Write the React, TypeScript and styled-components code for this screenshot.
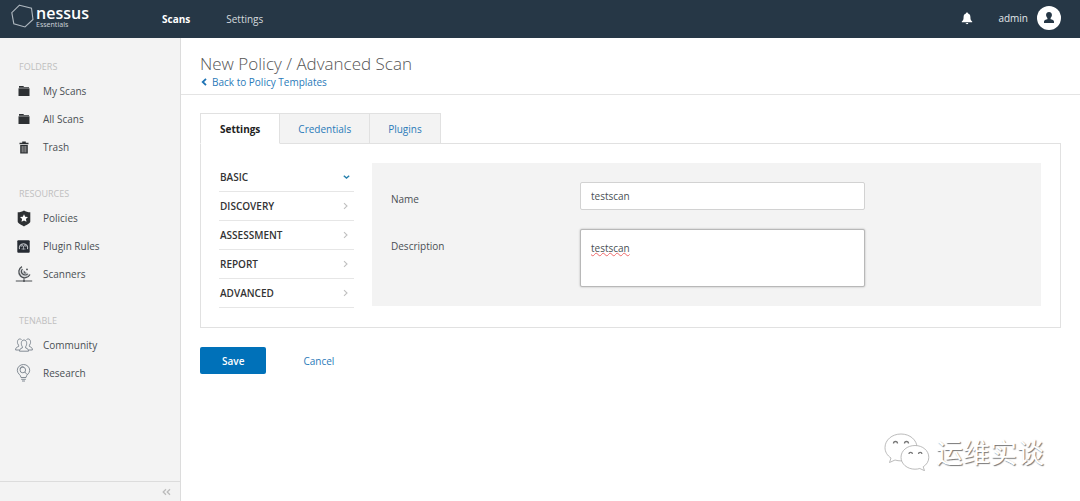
import React from 'react';
import styled, { createGlobalStyle } from 'styled-components';

const Global = createGlobalStyle`
  * { box-sizing: border-box; }
  body { margin: 0; background: #fff; color: #4a4f54; font: 10px/14px "Open Sans", "Noto Sans", sans-serif; }
  button, input, textarea { font: inherit; color: inherit; }
  a { color: inherit; text-decoration: none; }
  ul { list-style: none; margin: 0; padding: 0; }
  svg { display: block; flex: none; }
`;

const Page = styled.div`
  min-height: 100vh;
  display: flex;
  flex-direction: column;
`;

const TopBar = styled.header`
  height: 38px;
  padding: 0 19px 2px 11px;
  display: flex;
  align-items: center;
  background: #263746;
  color: #e3e7ea;
`;

const Brand = styled.a`
  display: flex;
  align-items: center;
  gap: 2px;
  width: 151px;
  margin-bottom: 4px;
`;

const BrandName = styled.span`
  display: block;
  font: 600 16px/16px "Open Sans", sans-serif;
  color: #fff;
`;

const BrandEdition = styled.span`
  display: block;
  font: 7px/7px "Noto Sans", sans-serif;
  color: #c9d0d6;
`;

const TopNav = styled.nav`
  display: flex;
  gap: 36px;
  flex: 1;
  padding-top: 2px;
`;

const TopLink = styled.a<{ $active?: boolean }>`
  color: ${(p) => (p.$active ? '#fff' : '#d5dade')};
  font-weight: ${(p) => (p.$active ? 700 : 400)};
`;

const IconButton = styled.button`
  display: flex;
  padding: 0;
  border: 0;
  background: none;
  cursor: pointer;
`;

const Account = styled.button`
  display: flex;
  align-items: center;
  gap: 9px;
  margin-left: 25px;
  padding: 0;
  border: 0;
  background: none;
  cursor: pointer;
`;

const Body = styled.div`
  flex: 1;
  display: flex;
`;

const Sidebar = styled.aside`
  width: 181px;
  flex: none;
  display: flex;
  flex-direction: column;
  background: #f3f3f3;
  border-right: 1px solid #dcdcdc;
`;

const SideGroups = styled.nav`
  flex: 1;
  padding-top: 19px;
  display: flex;
  flex-direction: column;
  gap: 23px;
`;

const SideHeading = styled.h2`
  margin: 0;
  padding-left: 19px;
  font-size: 9px;
  line-height: 20px;
  font-weight: 400;
  color: #bfbfbf;
`;

const SideLink = styled.a`
  display: flex;
  align-items: center;
  gap: 10px;
  height: 28px;
  padding-left: 14px;
`;

const IconSlot = styled.span`
  width: 19px;
  display: flex;
  justify-content: center;
`;

const Collapse = styled.button`
  height: 20px;
  padding: 0 9px;
  display: flex;
  justify-content: flex-end;
  align-items: center;
  border: 0;
  border-top: 1px solid #dcdcdc;
  background: none;
`;

const Main = styled.main`
  flex: 1;
  min-width: 0;
`;

const PageHead = styled.div`
  height: 57px;
  padding: 14px 19px 0;
  border-bottom: 1px solid #e4e4e4;
`;

const Title = styled.h1`
  margin: 0;
  font-size: 17px;
  line-height: 23px;
  font-weight: 300;
  color: #555;
`;

const BackLink = styled.a`
  display: flex;
  align-items: center;
  gap: 4px;
  color: #2a7ab9;
`;

const Content = styled.div`
  padding: 18px 19px;
`;

const Tabs = styled.div`
  display: flex;
`;

const Tab = styled.button<{ $active?: boolean }>`
  height: 31px;
  margin-bottom: -1px;
  padding: 0 ${(p) => (p.$active ? 19 : 18)}px;
  border: 1px solid #e1e1e1;
  border-bottom-color: ${(p) => (p.$active ? '#fff' : '#e1e1e1')};
  background: ${(p) => (p.$active ? '#fff' : '#f3f3f3')};
  color: ${(p) => (p.$active ? '#222' : '#2a7ab9')};
  font-weight: ${(p) => (p.$active ? 700 : 400)};
  z-index: 1;
  & + & { border-left-width: 0; }
`;

const Panel = styled.section`
  display: flex;
  align-items: flex-start;
  gap: 18px;
  padding: 19px 19px 19px 18px;
  border: 1px solid #e1e1e1;
`;

const SectionList = styled.ul`
  width: 135px;
  flex: none;
`;

const SectionButton = styled.button`
  width: 100%;
  height: 29px;
  padding: 0 4px 0 1px;
  display: flex;
  align-items: center;
  justify-content: space-between;
  border: 0;
  border-bottom: 1px solid #e6e6e6;
  background: none;
  font-weight: 600;
  color: #333;
`;

const Form = styled.form`
  flex: 1;
  display: grid;
  gap: 19px;
  padding: 19px;
  background: #f3f3f3;
`;

const Field = styled.div`
  display: grid;
  grid-template-columns: 170px minmax(0, 285px);
  column-gap: 19px;
`;

const Label = styled.label`
  padding-top: 10px;
`;

const TextInput = styled.input`
  height: 28px;
  padding: 0 10px;
  border: 1px solid #d2d2d2;
  border-radius: 2px;
  background: #fff;
  outline: 0;
`;

const TextArea = styled.textarea`
  height: 58px;
  padding: 11px 10px;
  border: 1px solid #b8b8b8;
  border-radius: 2px;
  box-shadow: 0 0 2px #aaa;
  background: #fff;
  outline: 0;
  resize: none;
  text-decoration: underline wavy #ee6a6a 1px;
  text-underline-offset: 0;
`;

const Actions = styled.div`
  display: flex;
  gap: 19px;
  margin-top: 19px;
`;

const Button = styled.button<{ $primary?: boolean }>`
  height: 27px;
  padding: 0 ${(p) => (p.$primary ? 22 : 18)}px;
  border: 0;
  border-radius: 2px;
  background: ${(p) => (p.$primary ? '#0071b9' : 'none')};
  color: ${(p) => (p.$primary ? '#fff' : '#2a7ab9')};
  font-weight: ${(p) => (p.$primary ? 600 : 400)};
`;

const Watermark = styled.div`
  position: absolute;
  right: 36px;
  bottom: 30px;
  display: flex;
  align-items: center;
  gap: 6px;
  font: 27px/38px "Noto Sans CJK SC", sans-serif;
  color: #fff;
  text-shadow: 1px 1px 1px #777;
`;

const dark = '#2d3033';
const slate = '#76808a';

const Folder = () => (
  <svg width="12" height="12" viewBox="0 0 12 12" fill={dark}>
    <path d="M1 2.700V1h4.300l.8 1H11v.7z" />
    <path d="M.5 3.300h11V11H.5z" />
  </svg>
);

const Trash = () => (
  <svg width="10" height="13" viewBox="0 0 10 13" fill={dark}>
    <path d="M3.2.5h3.6v1.2H9.5v1.6h-9V1.7h2.7z" />
    <path d="M1.2 4h7.6v8.5H1.2z" />
    <path d="M3.2 5v6.4M5 5v6.4M6.8 5v6.4" stroke="#b9b9b9" strokeWidth=".8" />
  </svg>
);

const Shield = () => (
  <svg width="14" height="17" viewBox="0 0 14 17">
    <path d="M7 .5C8.600 1.700 11 2.300 13.300 2.300V11.500C13.300 13.500 9.500 14.700 7 16.500 4.500 14.700.7 13.500.7 11.500V2.300C3 2.300 5.400 1.700 7 .5z" fill={dark} />
    <path d="M7 4.200l1.200 2.600 2.800.3-2.100 1.900.6 2.800L7 10.400l-2.500 1.400.6-2.800L3 7.100l2.800-.3z" fill="#fff" />
  </svg>
);

const Rules = () => (
  <svg width="13" height="13" viewBox="0 0 13 13" fill="none">
    <rect x=".3" y=".3" width="12.400" height="12.400" rx="1" fill="#262b33" />
    <path d="M2.500 9.200A4.200 4.200 0 1 1 10.500 9.200" stroke="#c3c6ca" strokeWidth="1.100" />
    <path d="M4 7l1.200-2.400L6.500 7.300l1.300-2.700L9 7M6.500 6v3.500M4.500 9h4" stroke="#b0b4ba" strokeWidth=".8" />
  </svg>
);

const Dish = () => (
  <svg width="18" height="18" viewBox="0 0 18 18" fill="none" stroke="#4b4f53">
    <path d="M5.500 2.600A6 6 0 1 0 14.600 9.500z" fill="#d6d8da" stroke="none" />
    <path d="M7 1.600A5.900 5.900 0 1 0 15 9.500" strokeWidth="1.200" />
    <path d="M7.500 4A3.500 3.500 0 1 0 12.700 8.800" strokeWidth="1.100" />
    <path d="M9.300 6.200v1.800h1.900" strokeWidth="1" />
    <circle cx="12" cy="4.400" r=".9" fill="#4b4f53" stroke="none" />
    <path d="M9 13v2.500M.8 16h16.400" />
    <circle cx="9" cy="16" r="1" fill="#4b4f53" stroke="none" />
  </svg>
);

const People = () => (
  <svg width="18" height="14" viewBox="0 0 18 14" fill="none" stroke={slate} strokeWidth=".9">
    <path d="M4.500 13.200c0-2 .8-2.600 2.800-3.200V8.600C5.700 6.500 5.900 2 9 2s3.300 4.500 1.700 6.600V10c2 .6 2.800 1.200 2.800 3.200z" />
    <path d="M6.500 1.500C3.500-.2 1.900 2.600 2.600 5.400l1 1.900v1.200C1.600 9.200.6 9.800.6 12h3.600M11.500 1.500c3-1.700 4.600 1.100 3.900 3.900l-1 1.900v1.200c2 .7 3 1.300 3 3.500h-3.600" />
  </svg>
);

const Bulb = () => (
  <svg width="15" height="18" viewBox="0 0 15 18" fill="none" stroke={slate} strokeWidth=".9">
    <path d="M5 13.500C5 10.800 1.300 9.800 1.300 6.300a6.200 5.800 0 0 1 12.400 0C13.700 9.800 10 10.800 10 13.500z" />
    <path d="M5.200 15.300h4.600M6 17h3" />
    <circle cx="6.800" cy="6" r="2.800" />
    <path d="M8.800 8l2.400 2.700M4 4.600c.5-1.500 2-2.200 3.500-2" />
  </svg>
);

const Chevron = ({ down }: { down?: boolean }) => (
  <svg width="7" height="8" viewBox="0 0 7 8" fill="none" stroke={down ? '#2780ad' : '#c0c0c0'} strokeWidth={down ? 1.4 : 1.1}>
    <path d={down ? 'M.8 2.700l2.700 2.400 2.700-2.400' : 'M1 1.200l3 2.800-3 2.800'} />
  </svg>
);

const groups = [
  { title: 'FOLDERS', items: [['My Scans', Folder], ['All Scans', Folder], ['Trash', Trash]] },
  { title: 'RESOURCES', items: [['Policies', Shield], ['Plugin Rules', Rules], ['Scanners', Dish]] },
  { title: 'TENABLE', items: [['Community', People], ['Research', Bulb]] },
] as { title: string; items: [string, React.FC][] }[];

const sections = ['BASIC', 'DISCOVERY', 'ASSESSMENT', 'REPORT', 'ADVANCED'];

export default function App() {
  return (
    <Page>
      <Global />
      <TopBar>
        <Brand href="#">
          <svg width="23" height="24" viewBox="0 0 23 24" fill="none" stroke="#aeb7bf" strokeWidth="1.100">
            <path d="M8.500 1.200L20.500 4.300 22 15.500 14 23 2.800 19.700.8 8.600z" />
          </svg>
          <span>
            <BrandName>nessus</BrandName>
            <BrandEdition>Essentials</BrandEdition>
          </span>
        </Brand>
        <TopNav>
          <TopLink href="#" $active>Scans</TopLink>
          <TopLink href="#">Settings</TopLink>
        </TopNav>
        <IconButton aria-label="Notifications">
          <svg width="12" height="13" viewBox="0 0 12 13" fill="#fff">
            <path d="M6 .6c.7 0 1 .4 1 1C8.700 2 9.400 3.400 9.400 5c0 2.800.6 3.600 1.800 4.600v.7H.8v-.7C2 8.600 2.600 7.800 2.600 5c0-1.600.7-3 2.400-3.400 0-.6.3-1 1-1zM4.700 11h2.600c-.1.8-.6 1.200-1.300 1.200S4.800 11.800 4.700 11z" />
          </svg>
        </IconButton>
        <Account>
          admin
          <svg width="24" height="24" viewBox="0 0 24 24">
            <circle cx="12" cy="12" r="12" fill="#fff" />
            <path d="M12 6c2 0 3.100 1.400 2.900 3.300-.1 1.400-.8 2-1.300 2.700v1.300c1.800.5 3.400.8 3.400 2.300V17H7v-1.400c0-1.500 1.600-1.800 3.400-2.300V12c-.5-.7-1.200-1.300-1.300-2.700C8.900 7.400 10 6 12 6z" fill="#263746" />
          </svg>
        </Account>
      </TopBar>
      <Body>
        <Sidebar>
          <SideGroups>
            {groups.map((g) => (
              <section key={g.title}>
                <SideHeading>{g.title}</SideHeading>
                <ul>
                  {g.items.map(([name, Icon]) => (
                    <li key={name}>
                      <SideLink href="#">
                        <IconSlot><Icon /></IconSlot>
                        {name}
                      </SideLink>
                    </li>
                  ))}
                </ul>
              </section>
            ))}
          </SideGroups>
          <Collapse aria-label="Collapse sidebar">
            <svg width="9" height="8" viewBox="0 0 9 8" fill="none" stroke="#bcbcbc" strokeWidth="1.300">
              <path d="M4 1.200L1.200 4 4 6.800M8 1.200L5.200 4 8 6.800" />
            </svg>
          </Collapse>
        </Sidebar>
        <Main>
          <PageHead>
            <Title>New Policy / Advanced Scan</Title>
            <BackLink href="#">
              <svg width="8" height="8" viewBox="0 0 8 8" fill="none" stroke="#1f74b5" strokeWidth="1.800">
                <path d="M6 .8L2.700 4 6 7.200" />
              </svg>
              Back to Policy Templates
            </BackLink>
          </PageHead>
          <Content>
            <Tabs role="tablist">
              <Tab role="tab" aria-selected $active>Settings</Tab>
              <Tab role="tab">Credentials</Tab>
              <Tab role="tab">Plugins</Tab>
            </Tabs>
            <Panel>
              <SectionList>
                {sections.map((s, i) => (
                  <li key={s}>
                    <SectionButton>{s}<Chevron down={i === 0} /></SectionButton>
                  </li>
                ))}
              </SectionList>
              <Form id="policy">
                <Field>
                  <Label htmlFor="name">Name</Label>
                  <TextInput id="name" defaultValue="testscan" />
                </Field>
                <Field>
                  <Label htmlFor="description">Description</Label>
                  <TextArea id="description" defaultValue="testscan" />
                </Field>
              </Form>
            </Panel>
            <Actions>
              <Button $primary form="policy">Save</Button>
              <Button type="button">Cancel</Button>
            </Actions>
          </Content>
        </Main>
      </Body>
      <Watermark>
        <svg width="46" height="38" viewBox="0 0 46 38" fill="#fff" stroke="#aaa" strokeWidth=".8">
          <path d="M17 1C8 1 1 7 1 14.500c0 4.500 2.300 8 6 10.500L5.500 29.500 11 27c2 .6 4 .9 6 .9 9 0 16-6 16-13.400S26 1 17 1z" />
          <path d="M31 12.500c-7.800 0-14 5.200-14 11.800s6.200 11.900 14 11.900c1.700 0 3.300-.3 4.800-.7l4.700 2.200-1.300-3.900c3.500-2.200 5.600-5.500 5.600-9.500 0-6.600-6-11.800-13.800-11.800z" />
          <path d="M9.500 10.500a2 2 0 0 1 4 0M20.500 10.500a2 2 0 0 1 4 0M25 21a1.700 1.700 0 0 1 3.400 0M34.500 21a1.700 1.700 0 0 1 3.400 0" fill="none" stroke="#777" strokeWidth="1.300" />
        </svg>
        运维实谈
      </Watermark>
    </Page>
  );
}
